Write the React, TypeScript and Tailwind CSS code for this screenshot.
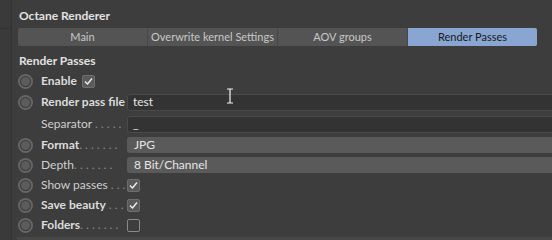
import React from "react";

const Radio = () => (
  <div className="w-[15px] h-[15px] rounded-full bg-[#666666] flex items-center justify-center shrink-0">
    <div className="w-[11px] h-[11px] rounded-full bg-[#3a3a3a] flex items-center justify-center">
      <div className="w-[9px] h-[9px] rounded-full bg-[#5c5c5c]" />
    </div>
  </div>
);

const Check = ({ checked }: { checked: boolean }) => (
  <div
    className={
      checked
        ? "w-[13px] h-[13px] rounded-[2px] bg-[#5a5a5a] border border-[#6e6e6e] flex items-center justify-center shrink-0"
        : "w-[13px] h-[13px] rounded-[2px] border border-[#8a8a8a] shrink-0"
    }
  >
    {checked && (
      <svg width="9" height="9" viewBox="0 0 9 9">
        <path d="M1 4.5 L3.5 7 L8 1.5" stroke="#f0f0f0" strokeWidth="1.4" fill="none" />
      </svg>
    )}
  </div>
);

const Label = ({ text, dots, bold }: { text: string; dots: string; bold?: boolean }) => (
  <div className="w-[86px] shrink-0 whitespace-nowrap">
    <span className={bold ? "font-bold text-[#dcdcdc]" : "text-[#cfcfcf]"}>{text}</span>
    <span className="text-[#8a8a8a]">{dots}</span>
  </div>
);

export default function App() {
  const tabs = ["Main", "Overwrite kernel Settings", "AOV groups", "Render Passes"];
  return (
    <div className="flex w-[552px] h-[240px] overflow-hidden bg-[#3d3d3d] font-['Lato',sans-serif] text-[12px] leading-[16px]">
      <div className="w-[12px] shrink-0 bg-[#3a3a3a] border-r border-[#333333] flex flex-col">
        <div className="h-[29px] border-b border-[#323232]" />
      </div>
      <div className="flex-1 pl-[6px] pt-[8px] min-w-0">
        <div className="pl-[1px] font-bold text-[12px] text-[#e2e2e2] h-[16px] leading-[16px]">Octane Renderer</div>
        <div className="mt-[4px] flex w-[519px] h-[18px] rounded-[2px] overflow-hidden bg-[#545454] text-[11px]">
          {tabs.map((t, i) => (
            <div
              key={t}
              className={
                i === 3
                  ? "flex-1 flex items-center justify-center whitespace-nowrap bg-[#89a5d2] text-[#1a1a1a]"
                  : "flex-1 flex items-center justify-center whitespace-nowrap text-[#c8c8c8] border-r border-[#474747]"
              }
            >
              {t}
            </div>
          ))}
        </div>
        <div className="mt-[7px] pl-[1px] font-bold text-[#e2e2e2] h-[16px]">Render Passes</div>
        <div className="mt-[2px] flex flex-col">
          <div className="h-[20px] flex items-center">
            <Radio />
            <div className="ml-[8px] font-bold text-[#dcdcdc] mr-[5px]">Enable</div>
            <Check checked />
          </div>
          <div className="h-[22px] flex items-center">
            <Radio />
            <div className="ml-[8px]">
              <Label text="Render pass file" dots="" bold />
            </div>
            <div className="flex-1 h-[17px] -mr-[4px] rounded-[3px] bg-[#333333] border border-[#4a4a4a] flex items-center pl-[5px] text-[#e6e6e6] relative">
              test
              <svg className="absolute left-[97px] top-[-7px]" width="10" height="16" viewBox="0 0 10 16">
                <path d="M2 1 H8 M5 1 V15 M2 15 H8" stroke="#f4f4f4" strokeWidth="1.2" fill="none" />
              </svg>
            </div>
          </div>
          <div className="h-[22px] flex items-center">
            <div className="w-[15px] shrink-0" />
            <div className="ml-[8px]">
              <Label text="Separator" dots=" . . . . ." />
            </div>
            <div className="flex-1 h-[17px] -mr-[4px] rounded-[3px] bg-[#333333] border border-[#4a4a4a] flex items-center pl-[5px] text-[#e6e6e6]">
              _
            </div>
          </div>
          <div className="h-[20px] flex items-center">
            <Radio />
            <div className="ml-[8px]">
              <Label text="Format" dots=". . . . . . ." bold />
            </div>
            <div className="flex-1 h-[16px] -mr-[4px] rounded-[3px] bg-[#5a5a5a] flex items-center pl-[7px] text-[#e6e6e6]">
              JPG
            </div>
          </div>
          <div className="h-[20px] flex items-center">
            <Radio />
            <div className="ml-[8px]">
              <Label text="Depth" dots=". . . . . . ." />
            </div>
            <div className="flex-1 h-[16px] -mr-[4px] rounded-[3px] bg-[#5a5a5a] flex items-center pl-[7px] text-[#e6e6e6]">
              8 Bit/Channel
            </div>
          </div>
          <div className="h-[20px] flex items-center">
            <Radio />
            <div className="ml-[8px]">
              <Label text="Show passes" dots=" . . ." />
            </div>
            <Check checked />
          </div>
          <div className="h-[20px] flex items-center">
            <Radio />
            <div className="ml-[8px]">
              <Label text="Save beauty" dots=" . . ." bold />
            </div>
            <Check checked />
          </div>
          <div className="h-[20px] flex items-center">
            <Radio />
            <div className="ml-[8px]">
              <Label text="Folders" dots=". . . . . . ." bold />
            </div>
            <Check checked={false} />
          </div>
          <div className="mt-[2px] h-[4px] -ml-[1px] bg-[#474747]" />
        </div>
      </div>
    </div>
  );
}
